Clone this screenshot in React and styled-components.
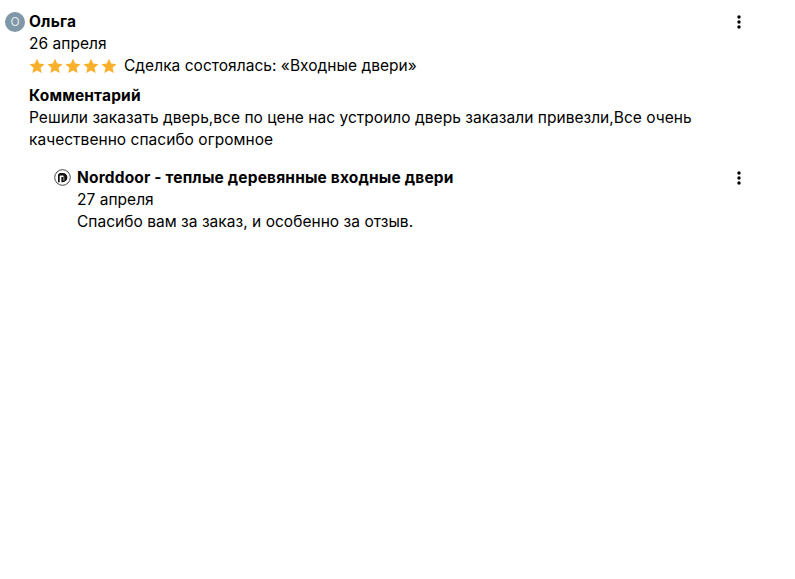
import React from "react";
import styled, { createGlobalStyle } from "styled-components";

const Global = createGlobalStyle`
  html, body { margin: 0; padding: 0; background: #fff; }
  body { font-family: "Inter", "Noto Sans", sans-serif; color: #000; }
`;

const Page = styled.div`
  width: 795px;
  height: 579px;
  box-sizing: border-box;
  padding: 11px 49px 0 5px;
  overflow: hidden;
`;

const Review = styled.article`
  display: grid;
  grid-template-columns: 20px 1fr 14px;
  column-gap: 4px;
  padding-left: ${(p) => p.$indent || 0}px;
`;

const AvatarCircle = styled.div`
  width: 20px;
  height: 20px;
  margin-top: 1px;
  border-radius: 50%;
  background: #7f97a6;
  color: #e3eaee;
  font-size: 12px;
  line-height: 20px;
  text-align: center;
`;

const Body = styled.div`
  min-width: 0;
`;

const Name = styled.div`
  font-size: 15.5px;
  line-height: 22px;
  font-weight: 700;
  letter-spacing: 0.17px;
`;

const Line = styled.div`
  font-size: 15.5px;
  line-height: 22px;
  letter-spacing: 0.03px;
`;

const RatingRow = styled.div`
  display: flex;
  align-items: center;
  gap: 7px;
  font-size: 15.5px;
  line-height: 22px;
  letter-spacing: 0.03px;
`;

const Stars = styled.div`
  display: flex;
  gap: 2px;
`;

const Comment = styled.div`
  margin-top: 8px;
  width: 680px;
`;

const Reply = styled.div`
  margin-top: 16px;
`;

const Menu = styled.button`
  border: 0;
  background: none;
  padding: 0;
  width: 14px;
  height: 22px;
  display: flex;
  align-items: center;
  justify-content: center;
`;

const Star = () => (
  <svg width="16" height="16" viewBox="0 0 24 24" fill="#fbb02d">
    <path d="M12 1l3.3 7.4 8 .9-6 5.4 1.7 7.9L12 18.6l-7 4 1.7-7.9-6-5.4 8-.9z" />
  </svg>
);

const Dots = () => (
  <svg width="4" height="14" viewBox="0 0 4 14" fill="#000">
    <circle cx="2" cy="2" r="1.7" />
    <circle cx="2" cy="7" r="1.7" />
    <circle cx="2" cy="12" r="1.7" />
  </svg>
);

const Logo = () => (
  <svg width="17" height="17" viewBox="0 0 17 17">
    <circle cx="8.5" cy="8.5" r="7.8" fill="#fff" stroke="#444" strokeWidth="1" />
    <path d="M4 13.2V6.6A2.6 2.6 0 0 1 6.6 4h2.2a4.6 4.6 0 0 1 4.6 4.6 4.6 4.6 0 0 1-4.6 4.6H7.4V8h1.5a.6.6 0 0 0 0-1.6H6.6a.9.9 0 0 0-.9.9v5.9z" fill="#111" />
    <path d="M9.6 7.4h.6v4.4h-.6z" fill="#fff" />
  </svg>
);

const LogoWrap = styled.div`
  display: flex;
  justify-content: flex-end;
  padding: 2px 2px 0 0;
`;

export default function App() {
  return (
    <Page>
      <Global />
      <Review>
        <AvatarCircle>О</AvatarCircle>
        <Body>
          <Name>Ольга</Name>
          <Line>26 апреля</Line>
          <RatingRow>
            <Stars>
              <Star /><Star /><Star /><Star /><Star />
            </Stars>
            Сделка состоялась: «Входные двери»
          </RatingRow>
          <Comment>
            <Name>Комментарий</Name>
            <Line>
              Решили заказать дверь,все по цене нас устроило дверь заказали привезли,Все очень качественно спасибо огромное
            </Line>
          </Comment>
        </Body>
        <Menu aria-label="Ещё"><Dots /></Menu>
      </Review>
      <Reply>
        <Review $indent={48}>
          <LogoWrap><Logo /></LogoWrap>
          <Body>
            <Name>Norddoor - теплые деревянные входные двери</Name>
            <Line>27 апреля</Line>
            <Line>Спасибо вам за заказ, и особенно за отзыв.</Line>
          </Body>
          <Menu aria-label="Ещё"><Dots /></Menu>
        </Review>
      </Reply>
    </Page>
  );
}
